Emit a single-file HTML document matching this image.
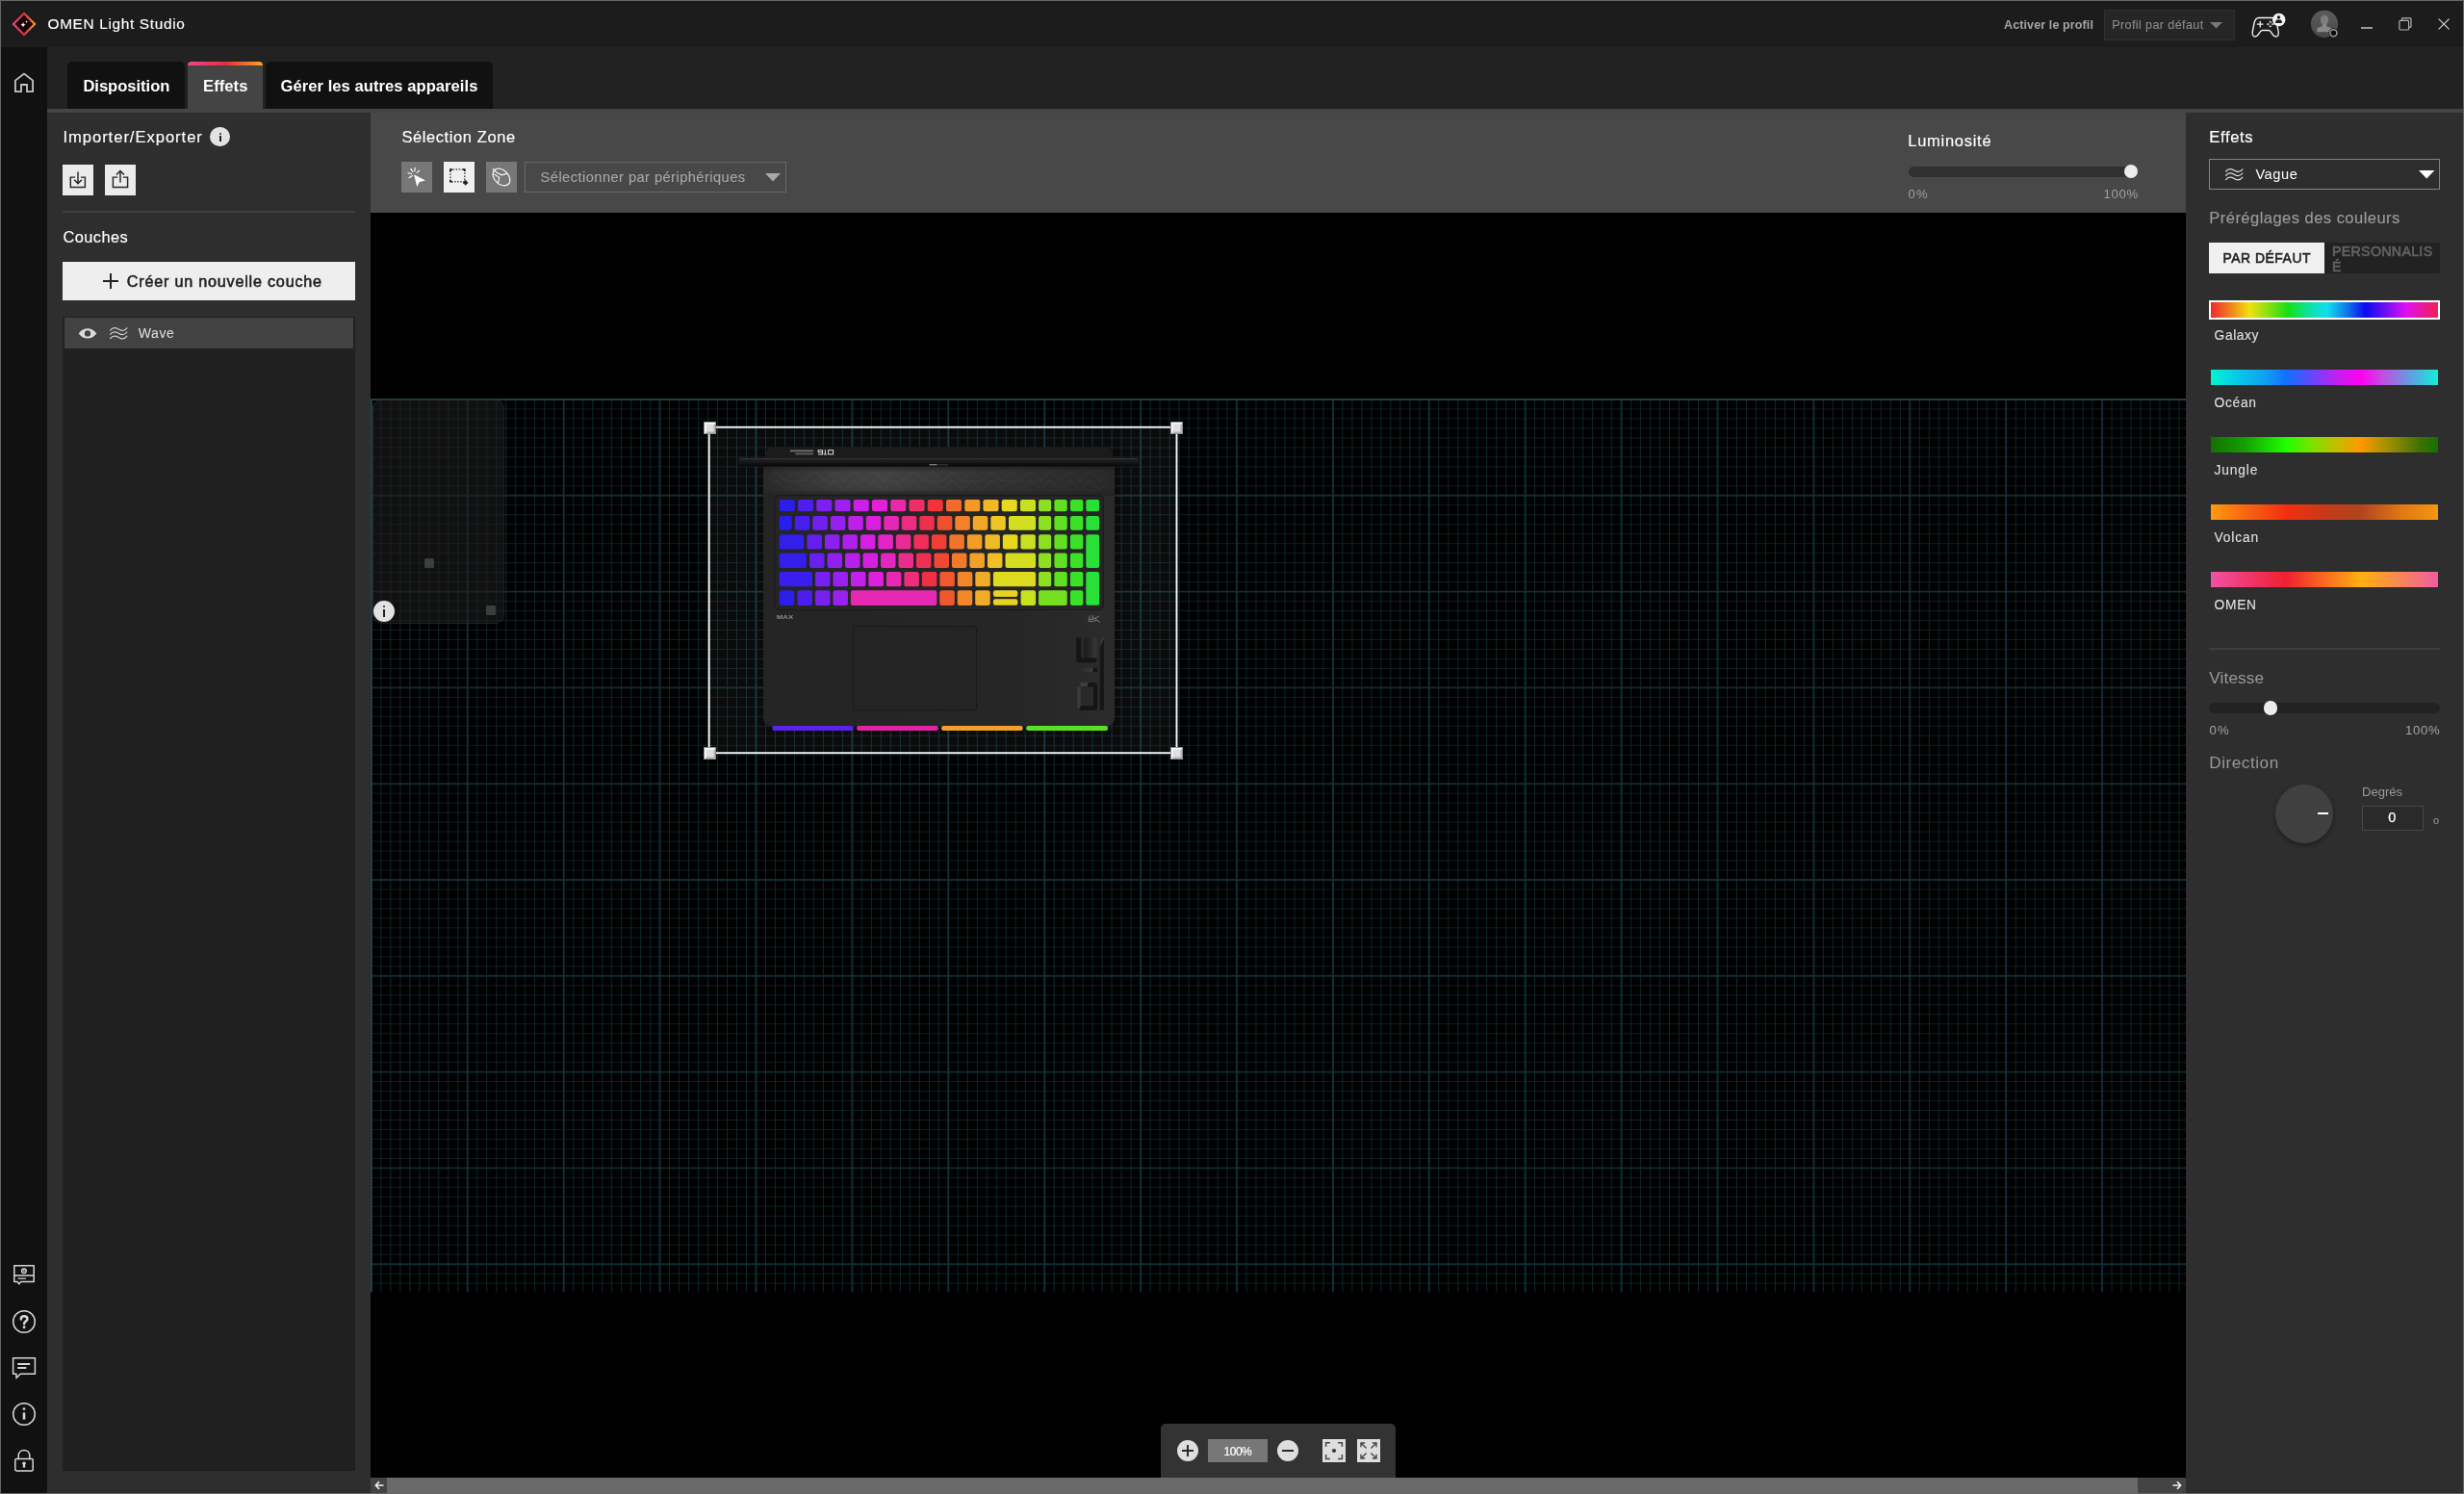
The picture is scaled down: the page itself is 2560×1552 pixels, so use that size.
<!DOCTYPE html>
<html><head><meta charset="utf-8"><title>OMEN Light Studio</title>
<style>
html,body{margin:0;padding:0;background:#000;}
body{width:2560px;height:1552px;position:relative;overflow:hidden;font-family:"Liberation Sans",sans-serif;}
.t{position:absolute;white-space:nowrap;margin:0;padding:0;}
.b{position:absolute;box-sizing:border-box;}
svg{position:absolute;overflow:visible;}
#root{position:absolute;left:0;top:0;width:2560px;height:1552px;will-change:transform;}
</style></head><body><div id="root">
<div class="b" style="left:0px;top:0px;width:2560px;height:49px;background:#1c1c1c;"></div>
<div class="b" style="left:0px;top:49px;width:49px;height:1503px;background:#111111;"></div>
<div class="b" style="left:49px;top:49px;width:2511px;height:64px;background:#222222;"></div>
<div class="b" style="left:49px;top:113px;width:2511px;height:4px;background:#444444;"></div>
<svg style="left:10px;top:10px" width="30" height="30" viewBox="0 0 30 30">
<defs><linearGradient id="lg" x1="0" y1="0" x2="1" y2="0"><stop offset="0" stop-color="#d84a8a"/><stop offset="0.5" stop-color="#e0303c"/><stop offset="1" stop-color="#f59a2a"/></linearGradient></defs>
<path d="M15 4 L26 15 L15 26 L4 15 Z" fill="#1a0508" stroke="url(#lg)" stroke-width="2.2" stroke-linejoin="miter"/>
<path d="M14 13.1 L14.75 15.05 L16.7 15.8 L14.75 16.55 L14 18.5 L13.25 16.55 L11.3 15.8 L13.25 15.05 Z" fill="#fff"/>
<path d="M17.6 11.2 L18 12.2 L19 12.6 L18 13 L17.6 14 L17.2 13 L16.2 12.6 L17.2 12.2 Z" fill="#fff"/>
</svg>
<div class="t" style="left:49.50px;top:16px;font-size:15.4px;line-height:17px;color:#fff;-webkit-text-stroke:0.15px #fff;letter-spacing:0.658px;">OMEN Light Studio</div>
<div class="t" style="left:2082.00px;top:19px;font-size:12.5px;line-height:14px;color:#a4a4a4;font-weight:700;letter-spacing:0.118px;">Activer le profil</div>
<div class="b" style="left:2186px;top:10px;width:136px;height:32px;background:#262626;border:1px solid #303030;"></div>
<div class="t" style="left:2194.20px;top:19px;font-size:12.6px;line-height:14px;color:#8c8c8c;-webkit-text-stroke:0.1px #8c8c8c;letter-spacing:0.379px;">Profil par défaut</div>
<svg style="left:2295.5px;top:23.3px" width="13" height="7" viewBox="0 0 13 7"><path d="M0 0 L13 0 L6.5 6.5 Z" fill="#777"/></svg>
<svg style="left:2338px;top:12px" width="38" height="28" viewBox="0 0 38 28" fill="none" stroke="#f2f2f2" stroke-width="1.35" stroke-linecap="round" stroke-linejoin="round">
<path d="M9 6.5 C6 6.5 4.8 8.5 4 12 L2.3 21 C1.7 24.5 3.2 26 5 26 C7 26 8 24.3 9.3 22.3 C10.3 20.6 11 19.5 12.5 19.5 L19 19.5 C20.5 19.5 21.2 20.6 22.2 22.3 C23.5 24.3 24.5 26 26.5 26 C28.3 26 29.8 24.5 29.2 21 L27.5 12 C26.7 8.5 25.5 6.5 22.5 6.5 Z"/>
<path d="M10.2 10.3 V16 M7.4 13.1 H13" stroke-width="1.3"/>
<g fill="none" stroke-width="0.8"><circle cx="18.3" cy="13.1" r="0.75"/><circle cx="23.1" cy="13.1" r="0.75"/><circle cx="20.7" cy="10.8" r="0.75"/><circle cx="20.7" cy="15.4" r="0.75"/></g>
<circle cx="29.7" cy="8.5" r="6.7" fill="#f4f4f4" stroke="none"/>
<circle cx="29.5" cy="5.9" r="1.75" fill="#1c1c1c" stroke="none"/>
<path d="M26.2 11.9 V10.4 Q26.2 8.6 28 8.6 H31 Q32.8 8.6 32.8 10.4 V11.9 Z" fill="#1c1c1c" stroke="none"/>
</svg>
<svg style="left:2400px;top:10px" width="32" height="32" viewBox="0 0 32 32">
<defs><clipPath id="av"><circle cx="15" cy="14.8" r="14.1"/></clipPath><linearGradient id="avg" x1="0" y1="0" x2="0" y2="1"><stop offset="0" stop-color="#5c5c5c"/><stop offset="1" stop-color="#474747"/></linearGradient>
<clipPath id="sh"><rect x="0" y="0" width="32" height="23.2"/></clipPath></defs>
<circle cx="15" cy="14.8" r="14.1" fill="url(#avg)"/>
<g clip-path="url(#av)"><rect x="0" y="23.2" width="32" height="10" fill="#4a4a4a"/>
<ellipse cx="15" cy="10.7" rx="4.2" ry="4.9" fill="#7e7e7e"/>
<g clip-path="url(#sh)"><path d="M7.2 24 V20.6 Q7.2 18.6 9.6 18.2 L12.6 17.4 L12.8 15 H17.2 L17.4 17.4 L20.4 18.2 Q22.8 18.6 22.8 20.6 V24 Z" fill="#888"/></g></g>
<circle cx="24.4" cy="24.3" r="5.1" fill="#1c1c1c"/><circle cx="24.4" cy="24.3" r="3.5" fill="#0a0a0a" stroke="#9a9a9a" stroke-width="1.5"/>
</svg>
<div class="b" style="left:2453px;top:28.4px;width:12.2px;height:1.5px;background:#999999;"></div>
<svg style="left:2492px;top:18px" width="14" height="14" viewBox="0 0 14 14" fill="none" stroke="#b4b4b4" stroke-width="1.15">
<rect x="0.9" y="3.3" width="9.7" height="9.7" rx="1"/><path d="M3.4 3.3 V1.7 Q3.4 0.8 4.3 0.8 H12.1 Q13 0.8 13 1.7 V9.4 Q13 10.3 12.1 10.3 H10.6"/></svg>
<svg style="left:2533px;top:19px" width="12" height="12" viewBox="0 0 12 12" stroke="#d0d0d0" stroke-width="1.15" stroke-linecap="round"><path d="M0.9 0.9 L11.2 11.1 M11.2 0.9 L0.9 11.1"/></svg>
<svg style="left:14px;top:75px" width="22" height="22" viewBox="0 0 22 22" fill="none" stroke="#c4c4c4" stroke-width="1.8" stroke-linejoin="miter"><path d="M1.9 20.1 V8.6 L11 1.6 L20.1 8.6 V20.1 H14 V13 H8 V20.1 Z"/></svg>
<div class="b" style="left:70px;top:64px;width:122px;height:49px;background:#111111;border-radius:5px 5px 0 0;"></div>
<div class="b" style="left:195px;top:64px;width:78px;height:53px;background:#444444;border-radius:5px 5px 0 0;overflow:hidden;"></div>
<div class="b" style="left:195px;top:64px;width:78px;height:4.3px;background:linear-gradient(90deg,#e8489a 0%,#ea2a3a 50%,#f6a722 100%);border-radius:5px 5px 0 0;"></div>
<div class="b" style="left:275.5px;top:64px;width:236.5px;height:49px;background:#111111;border-radius:5px 5px 0 0;"></div>
<div class="t" style="left:86.40px;top:80px;font-size:16.6px;line-height:19px;color:#fff;font-weight:700;letter-spacing:-0.034px;">Disposition</div>
<div class="t" style="left:211.00px;top:80px;font-size:16.6px;line-height:19px;color:#fff;font-weight:700;letter-spacing:0.063px;">Effets</div>
<div class="t" style="left:291.50px;top:80px;font-size:16.6px;line-height:19px;color:#fff;font-weight:700;letter-spacing:0.041px;">Gérer les autres appareils</div>
<svg style="left:13px;top:1313.4px" width="24" height="24" viewBox="0 0 24 24" fill="none" stroke="#d6d6d6" stroke-width="1.5" stroke-linejoin="round" stroke-linecap="round">
<path d="M1.8 1.8 H22.2 V18.6 H8.6 L6.9 20.9 L5.2 18.6 H1.8 Z"/><path d="M1.8 11.9 H22.2"/><circle cx="11.9" cy="7.2" r="2.3"/><path d="M11.2 6.1 L13.2 7.2 L11.2 8.3 Z" fill="#d6d6d6" stroke="none"/><path d="M6 15.1 H13.6" stroke-width="1.1"/></svg>
<svg style="left:12px;top:1360px" width="26" height="26" viewBox="0 0 26 26" fill="none" stroke="#d6d6d6" stroke-width="1.5" stroke-linejoin="round" stroke-linecap="round"><circle cx="13" cy="13" r="11.3"/>
<path d="M9.8 10.4 C9.8 8.4 11.2 7.3 13.1 7.3 C15 7.3 16.4 8.5 16.4 10.2 C16.4 12.6 13.1 12.5 13.1 15.3" stroke-width="2.5"/><circle cx="13.1" cy="18.8" r="1.45" fill="#d6d6d6" stroke="none"/></svg>
<svg style="left:12px;top:1409px" width="26" height="26" viewBox="0 0 26 26" fill="none" stroke="#d6d6d6" stroke-width="1.5" stroke-linejoin="round" stroke-linecap="round">
<path d="M1.6 1.8 H24.4 V18.2 H9.2 L5 22.6 V18.2 H1.6 Z"/><path d="M7 8 H18.4 M7 12 H14.6" stroke-width="2"/></svg>
<svg style="left:12px;top:1456px" width="26" height="26" viewBox="0 0 26 26" fill="none" stroke="#d6d6d6" stroke-width="1.5" stroke-linejoin="round" stroke-linecap="round"><circle cx="13" cy="13" r="11.3"/>
<path d="M13 11.4 V18.6" stroke-width="2.6" stroke-linecap="butt"/><circle cx="13" cy="7.6" r="1.35" fill="#d6d6d6" stroke="none"/></svg>
<svg style="left:13px;top:1505px" width="24" height="25" viewBox="0 0 24 25" fill="none" stroke="#d6d6d6" stroke-width="1.5" stroke-linejoin="round" stroke-linecap="round">
<rect x="2.8" y="10.6" width="18.4" height="12.4" rx="1.5"/><path d="M6.2 10.6 V7.4 C6.2 3.6 8.8 1.4 12 1.4 C15.2 1.4 17.8 3.6 17.8 7.4 V10.6"/><circle cx="12" cy="15.2" r="1.8" fill="#d6d6d6" stroke="none"/><path d="M11.2 15.6 L10.6 19.4 H13.4 L12.8 15.6 Z" fill="#d6d6d6" stroke="none"/></svg>
<div class="b" style="left:385px;top:221px;width:1886px;height:1314px;background:#000000;"></div>
<svg style="left:0;top:0" width="2560" height="1552" viewBox="0 0 2560 1552" fill="none"><path d="M385 424.98H2271M385 434.96H2271M385 444.94H2271M385 454.92H2271M385 464.90H2271M385 474.88H2271M385 484.86H2271M385 494.84H2271M385 504.82H2271M385 524.78H2271M385 534.76H2271M385 544.74H2271M385 554.72H2271M385 564.70H2271M385 574.68H2271M385 584.66H2271M385 594.64H2271M385 604.62H2271M385 624.58H2271M385 634.56H2271M385 644.54H2271M385 654.52H2271M385 664.50H2271M385 674.48H2271M385 684.46H2271M385 694.44H2271M385 704.42H2271M385 724.38H2271M385 734.36H2271M385 744.34H2271M385 754.32H2271M385 764.30H2271M385 774.28H2271M385 784.26H2271M385 794.24H2271M385 804.22H2271M385 824.18H2271M385 834.16H2271M385 844.14H2271M385 854.12H2271M385 864.10H2271M385 874.08H2271M385 884.06H2271M385 894.04H2271M385 904.02H2271M385 923.98H2271M385 933.96H2271M385 943.94H2271M385 953.92H2271M385 963.90H2271M385 973.88H2271M385 983.86H2271M385 993.84H2271M385 1003.82H2271M385 1023.78H2271M385 1033.76H2271M385 1043.74H2271M385 1053.72H2271M385 1063.70H2271M385 1073.68H2271M385 1083.66H2271M385 1093.64H2271M385 1103.62H2271M385 1123.58H2271M385 1133.56H2271M385 1143.54H2271M385 1153.52H2271M385 1163.50H2271M385 1173.48H2271M385 1183.46H2271M385 1193.44H2271M385 1203.42H2271M385 1223.38H2271M385 1233.36H2271M385 1243.34H2271M385 1253.32H2271M385 1263.30H2271M385 1273.28H2271M385 1283.26H2271M385 1293.24H2271M385 1303.22H2271M385 1323.18H2271M385 1333.16H2271" stroke="#0c2024" stroke-width="1.0"/><path d="M395.89 414V1342M405.88 414V1342M415.87 414V1342M425.86 414V1342M435.85 414V1342M445.84 414V1342M455.83 414V1342M465.82 414V1342M475.81 414V1342M495.79 414V1342M505.78 414V1342M515.77 414V1342M525.76 414V1342M535.75 414V1342M545.74 414V1342M555.73 414V1342M565.72 414V1342M575.71 414V1342M595.69 414V1342M605.68 414V1342M615.67 414V1342M625.66 414V1342M635.65 414V1342M645.64 414V1342M655.63 414V1342M665.62 414V1342M675.61 414V1342M695.59 414V1342M705.58 414V1342M715.57 414V1342M725.56 414V1342M735.55 414V1342M745.54 414V1342M755.53 414V1342M765.52 414V1342M775.51 414V1342M795.49 414V1342M805.48 414V1342M815.47 414V1342M825.46 414V1342M835.45 414V1342M845.44 414V1342M855.43 414V1342M865.42 414V1342M875.41 414V1342M895.39 414V1342M905.38 414V1342M915.37 414V1342M925.36 414V1342M935.35 414V1342M945.34 414V1342M955.33 414V1342M965.32 414V1342M975.31 414V1342M995.29 414V1342M1005.28 414V1342M1015.27 414V1342M1025.26 414V1342M1035.25 414V1342M1045.24 414V1342M1055.23 414V1342M1065.22 414V1342M1075.21 414V1342M1095.19 414V1342M1105.18 414V1342M1115.17 414V1342M1125.16 414V1342M1135.15 414V1342M1145.14 414V1342M1155.13 414V1342M1165.12 414V1342M1175.11 414V1342M1195.09 414V1342M1205.08 414V1342M1215.07 414V1342M1225.06 414V1342M1235.05 414V1342M1245.04 414V1342M1255.03 414V1342M1265.02 414V1342M1275.01 414V1342M1294.99 414V1342M1304.98 414V1342M1314.97 414V1342M1324.96 414V1342M1334.95 414V1342M1344.94 414V1342M1354.93 414V1342M1364.92 414V1342M1374.91 414V1342M1394.89 414V1342M1404.88 414V1342M1414.87 414V1342M1424.86 414V1342M1434.85 414V1342M1444.84 414V1342M1454.83 414V1342M1464.82 414V1342M1474.81 414V1342M1494.79 414V1342M1504.78 414V1342M1514.77 414V1342M1524.76 414V1342M1534.75 414V1342M1544.74 414V1342M1554.73 414V1342M1564.72 414V1342M1574.71 414V1342M1594.69 414V1342M1604.68 414V1342M1614.67 414V1342M1624.66 414V1342M1634.65 414V1342M1644.64 414V1342M1654.63 414V1342M1664.62 414V1342M1674.61 414V1342M1694.59 414V1342M1704.58 414V1342M1714.57 414V1342M1724.56 414V1342M1734.55 414V1342M1744.54 414V1342M1754.53 414V1342M1764.52 414V1342M1774.51 414V1342M1794.49 414V1342M1804.48 414V1342M1814.47 414V1342M1824.46 414V1342M1834.45 414V1342M1844.44 414V1342M1854.43 414V1342M1864.42 414V1342M1874.41 414V1342M1894.39 414V1342M1904.38 414V1342M1914.37 414V1342M1924.36 414V1342M1934.35 414V1342M1944.34 414V1342M1954.33 414V1342M1964.32 414V1342M1974.31 414V1342M1994.29 414V1342M2004.28 414V1342M2014.27 414V1342M2024.26 414V1342M2034.25 414V1342M2044.24 414V1342M2054.23 414V1342M2064.22 414V1342M2074.21 414V1342M2094.19 414V1342M2104.18 414V1342M2114.17 414V1342M2124.16 414V1342M2134.15 414V1342M2144.14 414V1342M2154.13 414V1342M2164.12 414V1342M2174.11 414V1342M2194.09 414V1342M2204.08 414V1342M2214.07 414V1342M2224.06 414V1342M2234.05 414V1342M2244.04 414V1342M2254.03 414V1342M2264.02 414V1342" stroke="#0e282d" stroke-width="1.0"/><path d="M385 415.00H2271M385 514.80H2271M385 614.60H2271M385 714.40H2271M385 814.20H2271M385 914.00H2271M385 1013.80H2271M385 1113.60H2271M385 1213.40H2271M385 1313.20H2271" stroke="#112c32" stroke-width="1.9"/><path d="M385.90 414V1342M485.80 414V1342M585.70 414V1342M685.60 414V1342M785.50 414V1342M885.40 414V1342M985.30 414V1342M1085.20 414V1342M1185.10 414V1342M1285.00 414V1342M1384.90 414V1342M1484.80 414V1342M1584.70 414V1342M1684.60 414V1342M1784.50 414V1342M1884.40 414V1342M1984.30 414V1342M2084.20 414V1342M2184.10 414V1342" stroke="#0f3139" stroke-width="1.9"/><path d="M385 415.00H2271M385.90 414V1342" stroke="#213f46" stroke-width="1.9"/></svg>
<div class="b" style="left:386.6px;top:414.6px;width:137.4px;height:233.8px;background:rgba(32,31,31,0.55);border-radius:9px;border:1px solid rgba(58,52,50,0.45);"></div>
<div class="b" style="left:441.3px;top:580.4px;width:10px;height:10px;background:rgba(90,90,90,0.6);border-radius:1.5px;"></div>
<div class="b" style="left:505px;top:629px;width:10px;height:10px;background:rgba(90,90,90,0.6);border-radius:1.5px;"></div>
<div class="b" style="left:388px;top:623.8px;width:22px;height:22px;background:#e2e2e2;border-radius:50%;"></div>
<div class="b" style="left:397.9px;top:628.6px;width:2.4px;height:2.4px;background:#222;border-radius:50%;"></div>
<div class="b" style="left:398px;top:632.6px;width:2.2px;height:8.4px;background:#222;"></div>
<svg style="left:0;top:0" width="2560" height="1552" viewBox="0 0 2560 1552"><rect x="737" y="444" width="486" height="338" fill="rgba(255,255,255,0.042)"/><defs>
<linearGradient id="sp" x1="0" y1="0" x2="1" y2="0"><stop offset="0" stop-color="#2a2a2a"/><stop offset="0.2" stop-color="#3e3e3e"/><stop offset="0.34" stop-color="#424242"/><stop offset="0.62" stop-color="#333333"/><stop offset="1" stop-color="#282828"/></linearGradient>
<linearGradient id="spv" x1="0" y1="0" x2="0" y2="1"><stop offset="0" stop-color="#1e1e1e" stop-opacity="0.75"/><stop offset="0.25" stop-color="#242424" stop-opacity="0"/><stop offset="0.75" stop-color="#242424" stop-opacity="0.1"/><stop offset="1" stop-color="#242424" stop-opacity="1"/></linearGradient>
<linearGradient id="hg" x1="0" y1="0" x2="0" y2="1"><stop offset="0" stop-color="#3c3c3c"/><stop offset="0.16" stop-color="#222"/><stop offset="0.55" stop-color="#151515"/><stop offset="1" stop-color="#070707"/></linearGradient>
<linearGradient id="bg" x1="0" y1="0" x2="1" y2="0"><stop offset="0" stop-color="#242424"/><stop offset="0.7" stop-color="#262626"/><stop offset="1" stop-color="#2b2b2b"/></linearGradient>
<pattern id="tri" x="0" y="0" width="20.4" height="9.6" patternUnits="userSpaceOnUse"><path d="M0 9.6 L10.2 0 L20.4 9.6 M-10.2 0 L0 9.6 M20.4 9.6 L30.6 0 M0 0 H20.4" stroke="#ffffff" stroke-opacity="0.06" stroke-width="0.9" fill="none"/></pattern>
<linearGradient id="em" x1="0" y1="0" x2="1" y2="0"><stop offset="0" stop-color="#1a1a1a"/><stop offset="0.4" stop-color="#262626"/><stop offset="1" stop-color="#383838"/></linearGradient>
<linearGradient id="kg" gradientUnits="userSpaceOnUse" x1="809.75" y1="0" x2="1142.22" y2="0"><stop offset="0.0000" stop-color="#1e1eea"/><stop offset="0.0725" stop-color="#461eee"/><stop offset="0.1449" stop-color="#8020f0"/><stop offset="0.2013" stop-color="#a020f0"/><stop offset="0.2576" stop-color="#cc20e8"/><stop offset="0.3140" stop-color="#e220d8"/><stop offset="0.3704" stop-color="#e82aa8"/><stop offset="0.4267" stop-color="#ee2e68"/><stop offset="0.4831" stop-color="#f03038"/><stop offset="0.5435" stop-color="#f26a2a"/><stop offset="0.6039" stop-color="#f29a28"/><stop offset="0.6602" stop-color="#f0b828"/><stop offset="0.7166" stop-color="#e8d820"/><stop offset="0.7770" stop-color="#c8e020"/><stop offset="0.8293" stop-color="#8ce020"/><stop offset="0.8776" stop-color="#60e020"/><stop offset="0.9259" stop-color="#3ce028"/><stop offset="0.9783" stop-color="#28e038"/></linearGradient><linearGradient id="em2" x1="0" y1="0" x2="1" y2="0"><stop offset="0" stop-color="#262626"/><stop offset="1" stop-color="#3c3c3c"/></linearGradient>
</defs><path d="M793 477 L797.6 466.4 Q798.6 464.2 801 464.2 H1150 Q1152.4 464.2 1153.4 466.4 L1158 477 Z" fill="#1b1b1b"/><path d="M793 483 H1158 V745 Q1158 754 1149 754 H802 Q793 754 793 745 Z" fill="url(#bg)"/><rect x="793" y="484" width="365" height="30.5" fill="url(#sp)"/><rect x="803" y="489" width="345" height="24" fill="url(#tri)"/><rect x="793" y="484" width="365" height="30.5" fill="url(#spv)"/><rect x="767" y="476" width="416.5" height="8.4" rx="3.6" fill="url(#hg)"/><rect x="965.5" y="482.2" width="8" height="1.1" fill="#9a9a9a"/><rect x="973.5" y="482.4" width="11.5" height="0.9" fill="#444"/><rect x="820.8" y="467.4" width="24.4" height="1.9" fill="#6e6e6e"/><rect x="826.4" y="470.5" width="18.8" height="1.9" fill="#5e5e5e"/><g fill="none" stroke="#dadada" stroke-width="1.05"><path d="M854.6 469.8 H850.2 V467.7 H854.6 V471.9 H850"/><path d="M857.4 467.2 V471.9 M855.8 471.9 H859"/><rect x="860.6" y="467.7" width="5" height="4.2"/></g><rect x="805.2" y="514.6" width="341.3" height="118.9" rx="4.5" fill="#252525" stroke="#1b1b1b" stroke-width="1.1"/><g filter="url(#kb)"><rect x="809.75" y="519.12" width="16.06" height="12.05" rx="2.2" fill="#2b1eeb"/><rect x="829.00" y="519.12" width="16.06" height="12.05" rx="2.2" fill="#4e1eee"/><rect x="848.24" y="519.12" width="16.06" height="12.05" rx="2.2" fill="#7c20f0"/><rect x="867.49" y="519.12" width="16.06" height="12.05" rx="2.2" fill="#9e20f0"/><rect x="886.74" y="519.12" width="16.06" height="12.05" rx="2.2" fill="#ca20e8"/><rect x="905.98" y="519.12" width="16.06" height="12.05" rx="2.2" fill="#e220d8"/><rect x="925.23" y="519.12" width="16.06" height="12.05" rx="2.2" fill="#e82aa7"/><rect x="944.48" y="519.12" width="16.06" height="12.05" rx="2.2" fill="#ee2e66"/><rect x="963.72" y="519.12" width="16.06" height="12.05" rx="2.2" fill="#f03437"/><rect x="982.97" y="519.12" width="16.06" height="12.05" rx="2.2" fill="#f26b2a"/><rect x="1002.22" y="519.12" width="16.06" height="12.05" rx="2.2" fill="#f29928"/><rect x="1021.46" y="519.12" width="16.06" height="12.05" rx="2.2" fill="#f0b828"/><rect x="1040.71" y="519.12" width="16.06" height="12.05" rx="2.2" fill="#e7d820"/><rect x="1059.96" y="519.12" width="16.06" height="12.05" rx="2.2" fill="#c8e020"/><rect x="1079.04" y="519.12" width="13.12" height="12.05" rx="2.2" fill="#8ce020"/><rect x="1095.37" y="519.12" width="13.38" height="12.05" rx="2.2" fill="#5fe020"/><rect x="1111.97" y="519.12" width="13.38" height="12.05" rx="2.2" fill="#3be029"/><rect x="1128.30" y="519.12" width="13.92" height="12.05" rx="2.2" fill="#28e038"/><rect x="809.75" y="535.98" width="12.85" height="14.72" rx="2.2" fill="#291eeb"/><rect x="825.81" y="535.98" width="15.53" height="14.72" rx="2.2" fill="#461eee"/><rect x="844.31" y="535.98" width="15.53" height="14.72" rx="2.2" fill="#7220f0"/><rect x="862.81" y="535.98" width="15.53" height="14.72" rx="2.2" fill="#9620f0"/><rect x="881.30" y="535.98" width="15.53" height="14.72" rx="2.2" fill="#bd20eb"/><rect x="899.80" y="535.98" width="15.53" height="14.72" rx="2.2" fill="#da20de"/><rect x="918.30" y="535.98" width="15.53" height="14.72" rx="2.2" fill="#e626b9"/><rect x="936.80" y="535.98" width="15.53" height="14.72" rx="2.2" fill="#ec2c80"/><rect x="955.29" y="535.98" width="15.53" height="14.72" rx="2.2" fill="#ef2f4b"/><rect x="973.79" y="535.98" width="15.53" height="14.72" rx="2.2" fill="#f15030"/><rect x="992.29" y="535.98" width="15.53" height="14.72" rx="2.2" fill="#f28129"/><rect x="1010.78" y="535.98" width="15.53" height="14.72" rx="2.2" fill="#f1a728"/><rect x="1029.28" y="535.98" width="15.53" height="14.72" rx="2.2" fill="#edc525"/><rect x="1047.99" y="535.98" width="28.11" height="14.72" rx="2.2" fill="#d2de20"/><rect x="1079.04" y="535.98" width="13.12" height="14.72" rx="2.2" fill="#8ce020"/><rect x="1095.37" y="535.98" width="13.38" height="14.72" rx="2.2" fill="#5fe020"/><rect x="1111.97" y="535.98" width="13.38" height="14.72" rx="2.2" fill="#3be029"/><rect x="1128.30" y="535.98" width="13.92" height="14.72" rx="2.2" fill="#28e038"/><rect x="809.75" y="555.26" width="25.43" height="15.26" rx="2.2" fill="#331eec"/><rect x="838.39" y="555.26" width="15.53" height="15.26" rx="2.2" fill="#641fef"/><rect x="856.89" y="555.26" width="15.53" height="15.26" rx="2.2" fill="#8b20f0"/><rect x="875.39" y="555.26" width="15.53" height="15.26" rx="2.2" fill="#af20ed"/><rect x="893.89" y="555.26" width="15.53" height="15.26" rx="2.2" fill="#d320e3"/><rect x="912.38" y="555.26" width="15.53" height="15.26" rx="2.2" fill="#e423c9"/><rect x="930.88" y="555.26" width="15.53" height="15.26" rx="2.2" fill="#ea2b94"/><rect x="949.38" y="555.26" width="15.53" height="15.26" rx="2.2" fill="#ef2f5a"/><rect x="967.87" y="555.26" width="15.53" height="15.26" rx="2.2" fill="#f13f34"/><rect x="986.37" y="555.26" width="15.53" height="15.26" rx="2.2" fill="#f2732a"/><rect x="1004.87" y="555.26" width="15.53" height="15.26" rx="2.2" fill="#f29d28"/><rect x="1023.37" y="555.26" width="15.53" height="15.26" rx="2.2" fill="#efbb27"/><rect x="1041.86" y="555.26" width="15.53" height="15.26" rx="2.2" fill="#e5d920"/><rect x="1060.36" y="555.26" width="15.53" height="15.26" rx="2.2" fill="#c8e020"/><rect x="1079.04" y="555.26" width="13.12" height="15.26" rx="2.2" fill="#8ce020"/><rect x="1095.37" y="555.26" width="13.38" height="15.26" rx="2.2" fill="#5fe020"/><rect x="1111.97" y="555.26" width="13.38" height="15.26" rx="2.2" fill="#3be029"/><rect x="809.75" y="574.53" width="28.11" height="15.53" rx="2.2" fill="#351eec"/><rect x="841.07" y="574.53" width="15.53" height="15.53" rx="2.2" fill="#6a1fef"/><rect x="859.55" y="574.53" width="15.53" height="15.53" rx="2.2" fill="#9020f0"/><rect x="878.04" y="574.53" width="15.53" height="15.53" rx="2.2" fill="#b520ec"/><rect x="896.52" y="574.53" width="15.53" height="15.53" rx="2.2" fill="#d620e0"/><rect x="915.01" y="574.53" width="15.53" height="15.53" rx="2.2" fill="#e525c2"/><rect x="933.49" y="574.53" width="15.53" height="15.53" rx="2.2" fill="#eb2c8b"/><rect x="951.97" y="574.53" width="15.53" height="15.53" rx="2.2" fill="#ef2f53"/><rect x="970.46" y="574.53" width="15.53" height="15.53" rx="2.2" fill="#f14733"/><rect x="988.94" y="574.53" width="15.53" height="15.53" rx="2.2" fill="#f27929"/><rect x="1007.42" y="574.53" width="15.53" height="15.53" rx="2.2" fill="#f2a128"/><rect x="1025.91" y="574.53" width="15.53" height="15.53" rx="2.2" fill="#eec026"/><rect x="1044.51" y="574.53" width="31.59" height="15.53" rx="2.2" fill="#d4dd20"/><rect x="1079.04" y="574.53" width="13.12" height="15.53" rx="2.2" fill="#8ce020"/><rect x="1095.37" y="574.53" width="13.38" height="15.53" rx="2.2" fill="#5fe020"/><rect x="1111.97" y="574.53" width="13.38" height="15.53" rx="2.2" fill="#3be029"/><rect x="809.75" y="594.07" width="34.26" height="15.26" rx="2.2" fill="#3a1eed"/><rect x="846.96" y="594.07" width="15.53" height="15.26" rx="2.2" fill="#7820f0"/><rect x="865.44" y="594.07" width="15.53" height="15.26" rx="2.2" fill="#9a20f0"/><rect x="883.93" y="594.07" width="15.53" height="15.26" rx="2.2" fill="#c320ea"/><rect x="902.41" y="594.07" width="15.53" height="15.26" rx="2.2" fill="#dd20db"/><rect x="920.89" y="594.07" width="15.53" height="15.26" rx="2.2" fill="#e728b3"/><rect x="939.38" y="594.07" width="15.53" height="15.26" rx="2.2" fill="#ed2d77"/><rect x="957.86" y="594.07" width="15.53" height="15.26" rx="2.2" fill="#ef2f44"/><rect x="976.35" y="594.07" width="15.53" height="15.26" rx="2.2" fill="#f1582e"/><rect x="994.83" y="594.07" width="15.53" height="15.26" rx="2.2" fill="#f28729"/><rect x="1013.31" y="594.07" width="15.53" height="15.26" rx="2.2" fill="#f1ab28"/><rect x="1031.93" y="594.07" width="44.17" height="15.26" rx="2.2" fill="#deda20"/><rect x="1079.04" y="594.07" width="13.12" height="15.26" rx="2.2" fill="#8ce020"/><rect x="1095.37" y="594.07" width="13.38" height="15.26" rx="2.2" fill="#5fe020"/><rect x="1111.97" y="594.07" width="13.38" height="15.26" rx="2.2" fill="#3be029"/><rect x="809.75" y="613.35" width="15.53" height="15.53" rx="2.2" fill="#2b1eeb"/><rect x="828.49" y="613.35" width="15.53" height="15.53" rx="2.2" fill="#4c1eee"/><rect x="846.96" y="613.35" width="15.53" height="15.53" rx="2.2" fill="#7820f0"/><rect x="865.43" y="613.35" width="15.53" height="15.53" rx="2.2" fill="#9a20f0"/><rect x="883.90" y="613.35" width="89.41" height="15.53" rx="2.2" fill="#e728b3"/><rect x="976.25" y="613.35" width="15.53" height="15.53" rx="2.2" fill="#f1572e"/><rect x="994.72" y="613.35" width="15.53" height="15.53" rx="2.2" fill="#f28729"/><rect x="1013.19" y="613.35" width="15.53" height="15.53" rx="2.2" fill="#f1ab28"/><rect x="1060.57" y="613.35" width="15.53" height="15.53" rx="2.2" fill="#c7e020"/><rect x="1079.04" y="613.35" width="29.71" height="15.53" rx="2.2" fill="#75e020"/><rect x="1111.97" y="613.35" width="13.38" height="15.53" rx="2.2" fill="#3be029"/><rect x="1128.30" y="555.26" width="13.92" height="34.80" rx="2.2" fill="#28e038"/><rect x="1128.30" y="594.07" width="13.92" height="34.80" rx="2.2" fill="#28e038"/><rect x="1031.93" y="613.35" width="25.43" height="6.69" rx="2.2" fill="#e9d221"/><rect x="1031.93" y="622.18" width="25.43" height="6.69" rx="2.2" fill="#e9d221"/></g><text x="806.8" y="642.5" font-size="4.6" font-weight="700" fill="#8c8c8c" font-family="Liberation Sans" textLength="17.5" lengthAdjust="spacingAndGlyphs">MAX</text><g stroke="#8a8a8a" stroke-width="0.85" fill="none" stroke-linecap="round"><path d="M1131.4 643.6 L1132.3 639.8 M1134.6 643.2 L1135.4 639.6 M1131 644 Q1136 644.4 1141.8 640.2 M1136.4 641.4 L1142.6 646.4 M1131.2 645.6 Q1136 646.2 1139.2 644.4"/></g><rect x="886.6" y="650.6" width="128.0" height="87.3" rx="2.5" fill="#242424" stroke="#1c1c1c" stroke-width="1.1"/><g><rect x="1126.5" y="662.6" width="13" height="21.2" rx="1.5" fill="url(#em)"/><path d="M1118.1 662.4 H1122.9 V683.4 H1139.6 V685.2 Q1139.6 688.2 1136.6 688.2 H1121.1 Q1118.1 688.2 1118.1 685.2 Z" fill="#151515"/><path d="M1146.6 662.2 L1145.4 662.2 L1142.8 672 L1144 672 Z" fill="#424242"/><path d="M1142.8 672.4 L1146.9 664 V737.8 H1142.8 Z" fill="#161616"/><rect x="1119.4" y="693.8" width="16.2" height="4.2" fill="url(#em2)"/><path d="M1136.4 693.8 H1140.2 V698 H1135.2 Z" fill="#151515"/><path d="M1119.4 714 L1122.8 713.6 V733.2 L1120.6 737 Q1119.4 736 1119.4 734 Z" fill="#3c3c3c"/><path d="M1122.4 709 H1130.6 L1129.6 713 H1122.6 Z" fill="#3e3e3e"/><path fill-rule="evenodd" d="M1130.8 708.9 H1137.2 Q1140.2 708.9 1140.2 711.9 V734.8 Q1140.2 737.8 1137.2 737.8 H1121.2 L1122.8 733.2 H1136 V713.6 H1129.6 Z" fill="#151515"/></g><rect x="802.3" y="753.9" width="84.3" height="5.1" rx="2.2" fill="#5a22ee"/><rect x="890.1" y="753.9" width="84.6" height="5.1" rx="2.2" fill="#e024a4"/><rect x="978.1" y="753.9" width="84.6" height="5.1" rx="2.2" fill="#f2a02a"/><rect x="1066.2" y="753.9" width="84.9" height="5.1" rx="2.2" fill="#58e024"/></svg>
<svg style="left:0;top:0" width="2560" height="1552" viewBox="0 0 2560 1552"><rect x="736.7" y="443.75" width="485.8" height="338.45" fill="none" stroke="#f8f8f8" stroke-width="1.9"/></svg>
<div class="b" style="left:731px;top:438px;width:13px;height:13px;background:#dedede;border:1px solid #8e8e8e;box-shadow:inset 1.6px 1.6px 0 #fcfcfc,inset -1.4px -1.4px 0 #b2b2b2;"></div>
<div class="b" style="left:1216px;top:438px;width:13px;height:13px;background:#dedede;border:1px solid #8e8e8e;box-shadow:inset 1.6px 1.6px 0 #fcfcfc,inset -1.4px -1.4px 0 #b2b2b2;"></div>
<div class="b" style="left:731px;top:776px;width:13px;height:13px;background:#dedede;border:1px solid #8e8e8e;box-shadow:inset 1.6px 1.6px 0 #fcfcfc,inset -1.4px -1.4px 0 #b2b2b2;"></div>
<div class="b" style="left:1216px;top:776px;width:13px;height:13px;background:#dedede;border:1px solid #8e8e8e;box-shadow:inset 1.6px 1.6px 0 #fcfcfc,inset -1.4px -1.4px 0 #b2b2b2;"></div>
<div class="b" style="left:385px;top:1535px;width:1886px;height:16px;background:#444444;"></div>
<div class="b" style="left:402px;top:1535px;width:1819px;height:16px;background:#696969;"></div>
<svg style="left:388.5px;top:1538px" width="10" height="10" viewBox="0 0 10 10" fill="none" stroke="#f0f0f0" stroke-width="1.5" stroke-linecap="round" stroke-linejoin="round"><path d="M9 5 H1.4 M4.6 1.6 L1.2 5 L4.6 8.4"/></svg>
<svg style="left:2257px;top:1538px" width="10" height="10" viewBox="0 0 10 10" fill="none" stroke="#f0f0f0" stroke-width="1.5" stroke-linecap="round" stroke-linejoin="round"><path d="M1 5 H8.6 M5.4 1.6 L8.8 5 L5.4 8.4"/></svg>
<div class="b" style="left:1206px;top:1479px;width:244px;height:56px;background:#333333;border-radius:5px 5px 0 0;"></div>
<div class="b" style="left:1223px;top:1496px;width:22px;height:22px;background:#dedede;border-radius:50%;"></div>
<div class="b" style="left:1228px;top:1506px;width:12px;height:2px;background:#2a2a2a;"></div>
<div class="b" style="left:1233px;top:1501px;width:2px;height:12px;background:#2a2a2a;"></div>
<div class="b" style="left:1255px;top:1495px;width:62px;height:24px;background:#777777;"></div>
<div class="t" style="left:1271.60px;top:1501px;font-size:12px;line-height:14px;color:#fff;-webkit-text-stroke:0.2px #fff;letter-spacing:-0.523px;">100%</div>
<div class="b" style="left:1327px;top:1496px;width:22px;height:22px;background:#dedede;border-radius:50%;"></div>
<div class="b" style="left:1332px;top:1505.9px;width:12px;height:2.3px;background:#2a2a2a;"></div>
<div class="b" style="left:1374px;top:1495px;width:24px;height:24px;background:#dedede;"></div>
<div class="b" style="left:1410px;top:1495px;width:24px;height:24px;background:#dedede;"></div>
<svg style="left:1374px;top:1495px" width="24" height="24" viewBox="0 0 24 24" fill="none" stroke="#484848" stroke-width="1.5"><path d="M3.6 8 V3.8 H8 M16 3.8 H20.4 V8 M20.4 16 V20.4 H16 M8 20.4 H3.6 V16"/><circle cx="12" cy="12" r="2.1" fill="#3a3a3a" stroke="none"/></svg>
<svg style="left:1410px;top:1495px" width="24" height="24" viewBox="0 0 24 24" fill="none" stroke="#484848" stroke-width="1.4"><path d="M9.6 9.6 L4 4 M4 8.2 V4 H8.2 M14.4 9.6 L20 4 M15.8 4 H20 V8.2 M9.6 14.4 L4 20 M4 15.8 V20 H8.2 M14.4 14.4 L20 20 M20 15.8 V20 H15.8"/></svg>
<div class="b" style="left:385px;top:117px;width:1886px;height:104px;background:#484848;"></div>
<div class="t" style="left:417.40px;top:133px;font-size:16.5px;line-height:18px;color:#fff;-webkit-text-stroke:0.15px #fff;letter-spacing:0.588px;">Sélection Zone</div>
<div class="b" style="left:417px;top:168px;width:32px;height:32px;background:#777777;"></div>
<div class="b" style="left:461px;top:168px;width:32px;height:32px;background:#f0f0f0;"></div>
<div class="b" style="left:505px;top:168px;width:32px;height:32px;background:#777777;"></div>
<svg style="left:417px;top:168px" width="32" height="32" viewBox="0 0 32 32"><path d="M13.1 13.3 L25 19.6 L18.8 21 L16.2 25.9 Z" fill="#fff"/>
<g stroke="#fff" stroke-width="1.15" stroke-linecap="round"><path d="M14.2 6.3 L13.9 9.7 M9.9 7.4 L11.9 10.5 M18.7 9.1 L16.2 11.4 M7.1 11.7 L10.5 12.5 M8 16.7 L11.4 14.5"/></g></svg>
<svg style="left:461px;top:168px" width="32" height="32" viewBox="0 0 32 32" fill="none"><rect x="6.9" y="8.1" width="14.9" height="12.6" stroke="#4a4a4a" stroke-width="1.5" stroke-dasharray="1.55 1.55" stroke-dashoffset="-2.6"/><path d="M6.9 10 V8.1 H8.9 M19.9 8.1 H21.8 V10 M6.9 18.8 V20.7 H8.9" stroke="#161616" stroke-width="1.55"/><path d="M20.1 21.8 H25.1 M22.6 19.3 V24.3" stroke="#1c1c1c" stroke-width="2.1"/></svg>
<svg style="left:505px;top:168px" width="32" height="32" viewBox="0 0 32 32" fill="none" stroke="#f6f6f6" stroke-width="1.2" stroke-linecap="round" stroke-linejoin="round"><ellipse cx="0" cy="0" rx="7.2" ry="10.3" transform="translate(15.95 16) rotate(-45)"/><path d="M10.1 10.75 L16.4 13.9 L21.5 12.45 M8.9 13.3 L13.8 16.4 L12.3 21.9 M7.3 7.35 L10.1 10.2"/></svg>
<div class="b" style="left:545px;top:168px;width:272px;height:32px;background:transparent;border:1px solid #686868;"></div>
<div class="t" style="left:561.60px;top:176px;font-size:14.6px;line-height:16px;color:#a8a8a8;-webkit-text-stroke:0.1px #a8a8a8;letter-spacing:0.472px;">Sélectionner par périphériques</div>
<svg style="left:795px;top:180px" width="16" height="8.4" viewBox="0 0 16 8.4"><path d="M0 0 L16 0 L8 8.4 Z" fill="#a8a8a8"/></svg>
<div class="t" style="left:1982.30px;top:137px;font-size:16.5px;line-height:18px;color:#fff;-webkit-text-stroke:0.15px #fff;letter-spacing:0.721px;">Luminosité</div>
<div class="b" style="left:1983px;top:173px;width:238px;height:10.5px;background:#303030;border-radius:5.5px;"></div>
<div class="b" style="left:2206.7px;top:170.7px;width:14.6px;height:14.6px;background:#ececec;border-radius:50%;"></div>
<div class="t" style="left:1982.60px;top:194px;font-size:13.2px;line-height:15px;color:#a2a2a2;letter-spacing:1.061px;">0%</div>
<div class="t" style="right:338.00px;top:194px;font-size:13.2px;line-height:15px;color:#a2a2a2;letter-spacing:0.685px;">100%</div>
<div class="b" style="left:49px;top:117px;width:336px;height:1434px;background:#2e2e2e;"></div>
<div class="t" style="left:65.40px;top:133px;font-size:16.6px;line-height:19px;color:#fff;-webkit-text-stroke:0.15px #fff;letter-spacing:0.962px;">Importer/Exporter</div>
<div class="b" style="left:218.3px;top:131.6px;width:20.6px;height:20.6px;background:#e2e2e2;border-radius:50%;"></div>
<div class="b" style="left:227.6px;top:137.8px;width:2.3px;height:2.3px;background:#222;border-radius:50%;"></div>
<div class="b" style="left:227.7px;top:141.3px;width:2.1px;height:5.5px;background:#222;"></div>
<div class="b" style="left:65px;top:171px;width:32px;height:32px;background:#ebebeb;"></div>
<div class="b" style="left:109px;top:171px;width:32px;height:32px;background:#ebebeb;"></div>
<svg style="left:65px;top:171px" width="32" height="32" viewBox="0 0 32 32" fill="none" stroke="#262626" stroke-width="1.45"><path d="M13.1 13.1 H8.3 V23.4 H23.4 V13.1 H18.9"/><path d="M16 7.6 V19.4 M12.1 15.7 L16 19.6 L19.9 15.7"/></svg>
<svg style="left:109px;top:171px" width="32" height="32" viewBox="0 0 32 32" fill="none" stroke="#262626" stroke-width="1.45"><path d="M13.2 13.1 H8.4 V23.4 H23.6 V13.1 H18.8"/><path d="M16 18.6 V6.8 M12 10.6 L16 6.6 L20 10.6"/></svg>
<div class="b" style="left:65px;top:219px;width:304px;height:2px;background:#3e3e3e;"></div>
<div class="t" style="left:65.60px;top:237px;font-size:16.4px;line-height:18px;color:#fff;-webkit-text-stroke:0.15px #fff;letter-spacing:0.396px;">Couches</div>
<div class="b" style="left:65px;top:272px;width:304px;height:40px;background:#eeeeee;"></div>
<div class="b" style="left:107px;top:291.2px;width:16px;height:1.6px;background:#222;"></div>
<div class="b" style="left:114.2px;top:284px;width:1.6px;height:16px;background:#222;"></div>
<div class="t" style="left:131.80px;top:283px;font-size:16.2px;line-height:18px;color:#222;-webkit-text-stroke:0.55px #222;letter-spacing:0.774px;">Créer un nouvelle couche</div>
<div class="b" style="left:65px;top:328.6px;width:304px;height:1199.4px;background:#202020;"></div>
<div class="b" style="left:67px;top:330px;width:300px;height:32px;background:#424242;"></div>
<svg style="left:81px;top:340px" width="20" height="13" viewBox="0 0 20 13"><path d="M0.7 6.4 C3.4 2.8 6.5 1.3 10 1.3 C13.5 1.3 16.6 2.8 19.3 6.4 C16.6 10 13.5 11.5 10 11.5 C6.5 11.5 3.4 10 0.7 6.4 Z" fill="#dcdcdc"/><circle cx="10" cy="6.4" r="3.15" fill="#424242"/><circle cx="10" cy="6.4" r="1.6" fill="#dcdcdc" opacity="0"/></svg>
<svg style="left:114px;top:340px" width="18.5" height="12.5" viewBox="0 0 18.5 12.5" fill="none" stroke="#d0d0d0" stroke-width="1.15" stroke-linecap="round"><path d="M0.6 3.2 C3 -0.2 5.5 -0.2 9.2 2.0 C12.8 4.2 15.4 4.2 17.9 0.8 M0.6 7.4 C3 4.0 5.5 4.0 9.2 6.2 C12.8 8.4 15.4 8.4 17.9 5.0 M0.6 11.6 C3 8.2 5.5 8.2 9.2 10.4 C12.8 12.6 15.4 12.6 17.9 9.2"/></svg>
<div class="t" style="left:143.70px;top:338px;font-size:14px;line-height:16px;color:#dcdcdc;-webkit-text-stroke:0.1px #dcdcdc;letter-spacing:0.608px;">Wave</div>
<div class="b" style="left:2271px;top:117px;width:288px;height:1434px;background:#2e2e2e;"></div>
<div class="t" style="left:2295.30px;top:133px;font-size:16.6px;line-height:19px;color:#fff;-webkit-text-stroke:0.2px #fff;letter-spacing:0.643px;">Effets</div>
<div class="b" style="left:2295px;top:165px;width:240px;height:32px;background:transparent;border:1px solid #848484;"></div>
<svg style="left:2312px;top:174.5px" width="18.5" height="12.5" viewBox="0 0 18.5 12.5" fill="none" stroke="#e0e0e0" stroke-width="1.15" stroke-linecap="round"><path d="M0.6 3.2 C3 -0.2 5.5 -0.2 9.2 2.0 C12.8 4.2 15.4 4.2 17.9 0.8 M0.6 7.4 C3 4.0 5.5 4.0 9.2 6.2 C12.8 8.4 15.4 8.4 17.9 5.0 M0.6 11.6 C3 8.2 5.5 8.2 9.2 10.4 C12.8 12.6 15.4 12.6 17.9 9.2"/></svg>
<div class="t" style="left:2343.40px;top:173px;font-size:14.6px;line-height:16px;color:#fff;letter-spacing:0.573px;">Vague</div>
<svg style="left:2512.6px;top:177px" width="16.4" height="8.6" viewBox="0 0 16.4 8.6"><path d="M0 0 L16.4 0 L8.2 8.6 Z" fill="#fff"/></svg>
<div class="t" style="left:2295.30px;top:217px;font-size:16.5px;line-height:18px;color:#9a9a9a;-webkit-text-stroke:0.15px #9a9a9a;letter-spacing:0.475px;">Préréglages des couleurs</div>
<div class="b" style="left:2295px;top:252px;width:120px;height:32px;background:#f0f0f0;"></div>
<div class="b" style="left:2415px;top:252px;width:120px;height:32px;background:#222222;"></div>
<div class="t" style="left:2309.60px;top:260px;font-size:13.9px;line-height:16px;color:#222;-webkit-text-stroke:0.55px #222;letter-spacing:0.516px;">PAR DÉFAUT</div>
<div class="t" style="left:2423.00px;top:253px;font-size:14.2px;line-height:16px;color:#636363;-webkit-text-stroke:0.6px #636363;letter-spacing:0.317px;">PERSONNALIS</div>
<div class="t" style="left:2423.00px;top:269px;font-size:14.2px;line-height:16px;color:#636363;-webkit-text-stroke:0.6px #636363;letter-spacing:0.000px;">É</div>
<div class="b" style="left:2295px;top:312px;width:240px;height:20px;background:#ffffff;"></div>
<div class="b" style="left:2297px;top:314px;width:236px;height:16px;background:linear-gradient(90deg,#f0282e 0%,#f0861e 9%,#f0e010 17%,#8ce010 25%,#14e014 34%,#10e0a0 43%,#10dff0 51%,#1078e8 60%,#0a0af0 68%,#7010f0 77%,#e010f0 86%,#f02050 100%);"></div>
<div class="t" style="left:2300.60px;top:341px;font-size:13.8px;line-height:15px;color:#e0e0e0;-webkit-text-stroke:0.1px #e0e0e0;letter-spacing:0.575px;">Galaxy</div>
<div class="b" style="left:2297px;top:384px;width:236px;height:16px;background:linear-gradient(90deg,#00f5d2 0%,#08c8e8 12%,#10a0f0 24%,#1070ff 33%,#5050ff 42%,#c020f0 55%,#ff00f0 66%,#c050e0 76%,#60a0e0 88%,#10f0d8 100%);"></div>
<div class="t" style="left:2300.60px;top:411px;font-size:13.8px;line-height:15px;color:#e0e0e0;-webkit-text-stroke:0.1px #e0e0e0;letter-spacing:0.668px;">Océan</div>
<div class="b" style="left:2297px;top:454px;width:236px;height:16px;background:linear-gradient(90deg,#127200 0%,#14a000 15%,#20ff00 33%,#80e000 45%,#c0c000 55%,#ff9800 66%,#a09000 78%,#407000 92%,#127200 100%);"></div>
<div class="t" style="left:2300.60px;top:481px;font-size:13.8px;line-height:15px;color:#e0e0e0;-webkit-text-stroke:0.1px #e0e0e0;letter-spacing:0.822px;">Jungle</div>
<div class="b" style="left:2297px;top:524px;width:236px;height:16px;background:linear-gradient(90deg,#ff9a10 0%,#f86a10 14%,#f23010 33%,#c43a1a 52%,#b0451e 66%,#e07814 84%,#f59610 100%);"></div>
<div class="t" style="left:2300.60px;top:551px;font-size:13.8px;line-height:15px;color:#e0e0e0;-webkit-text-stroke:0.1px #e0e0e0;letter-spacing:0.811px;">Volcan</div>
<div class="b" style="left:2297px;top:594px;width:236px;height:16px;background:linear-gradient(90deg,#f052a4 0%,#f03468 18%,#f02030 33%,#f86a20 50%,#ffb010 66%,#f88a50 82%,#f05ca4 100%);"></div>
<div class="t" style="left:2300.60px;top:621px;font-size:13.8px;line-height:15px;color:#e0e0e0;-webkit-text-stroke:0.1px #e0e0e0;letter-spacing:0.675px;">OMEN</div>
<div class="b" style="left:2295px;top:672.5px;width:240px;height:2px;background:#3e3e3e;"></div>
<div class="t" style="left:2295.30px;top:694px;font-size:17.2px;line-height:20px;color:#9a9a9a;letter-spacing:0.130px;">Vitesse</div>
<div class="b" style="left:2295px;top:730px;width:240px;height:10.5px;background:#222222;border-radius:5.5px;"></div>
<div class="b" style="left:2351.7px;top:728px;width:14.6px;height:14.6px;background:#ececec;border-radius:50%;"></div>
<div class="t" style="left:2295.60px;top:751px;font-size:13.2px;line-height:15px;color:#a2a2a2;letter-spacing:1.061px;">0%</div>
<div class="t" style="right:24.50px;top:751px;font-size:13.2px;line-height:15px;color:#a2a2a2;letter-spacing:0.685px;">100%</div>
<div class="t" style="left:2295.30px;top:782px;font-size:17.2px;line-height:20px;color:#9a9a9a;letter-spacing:0.515px;">Direction</div>
<div class="b" style="left:2364px;top:815px;width:60px;height:61px;background:#404040;border-radius:50%;box-shadow:0 2px 5px rgba(0,0,0,0.4);"></div>
<div class="b" style="left:2408px;top:844px;width:10.6px;height:2.2px;background:#ffffff;"></div>
<div class="t" style="left:2454.00px;top:815px;font-size:13px;line-height:15px;color:#9a9a9a;letter-spacing:0.015px;">Degrés</div>
<div class="b" style="left:2454px;top:837px;width:64px;height:26px;background:#2a2a2a;border:1px solid #464646;"></div>
<div class="t" style="left:2481.20px;top:841px;font-size:14.4px;line-height:16px;color:#fff;-webkit-text-stroke:0.25px #fff;letter-spacing:0.000px;">0</div>
<div class="t" style="left:2528.00px;top:846px;font-size:11px;line-height:12px;color:#9a9a9a;letter-spacing:0.000px;">o</div>
<div class="b" style="left:0px;top:0px;width:2560px;height:1px;background:#666666;"></div>
<div class="b" style="left:0px;top:0px;width:1px;height:1552px;background:#666666;"></div>
<div class="b" style="left:2559px;top:0px;width:1px;height:1552px;background:#666666;"></div>
<div class="b" style="left:0px;top:1551px;width:2560px;height:1px;background:#666666;"></div>
</div></body></html>
